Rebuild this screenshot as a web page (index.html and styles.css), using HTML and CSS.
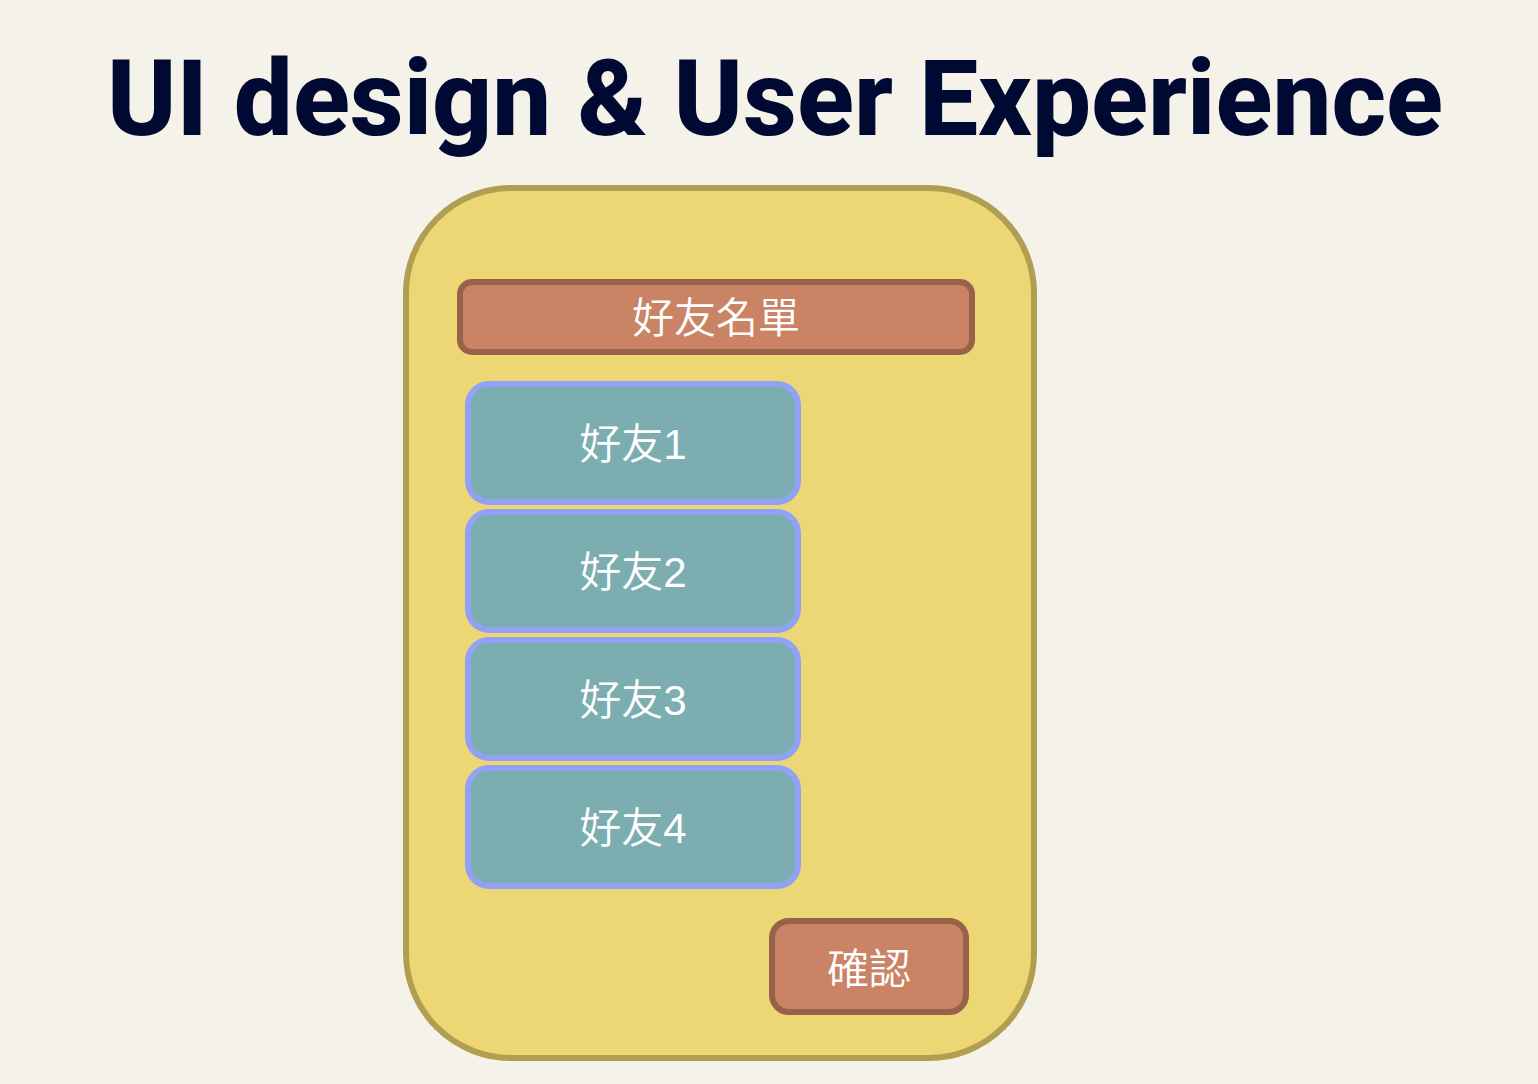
FILE: index.html
```html
<!DOCTYPE html>
<html lang="zh-Hant">
<head>
<meta charset="utf-8">
<meta name="viewport" content="width=device-width, initial-scale=1">
<title>UI design &amp; User Experience</title>
<link rel="stylesheet" href="styles.css">
</head>
<body>
<h1 class="title">UI design &amp; User Experience</h1>
<main class="stage">
  <section class="phone">
    <h2 class="heading">好友名單</h2>
    <div class="friends">
      <button class="friend" type="button">好友1</button>
      <button class="friend" type="button">好友2</button>
      <button class="friend" type="button">好友3</button>
      <button class="friend" type="button">好友4</button>
    </div>
    <button class="confirm" type="button">確認</button>
  </section>
</main>
</body>
</html>
```
FILE: styles.css
```css
* {
  box-sizing: border-box;
}

body {
  margin: 0;
  padding: 40px 24px 23px;
  background: #f5f2ea;
  color: #fff;
  font-family: "Liberation Sans", "Noto Sans CJK TC", sans-serif;
}

.title {
  margin: 0;
  padding-left: 12px;
  color: #000931;
  font-family: Roboto, "Liberation Sans", sans-serif;
  font-size: 105px;
  font-weight: 800;
  line-height: 120px;
  text-align: center;
  white-space: nowrap;
}

.stage {
  display: flex;
  justify-content: center;
  padding: 25px 98px 0 0;
}

.phone {
  display: flex;
  flex-direction: column;
  width: 100%;
  max-width: 634px;
  padding: 88px 56px 40px 48px;
  border: 6px solid #b09f51;
  border-radius: 108px;
  background: #edd674;
}

.heading,
.friend,
.confirm {
  margin: 0;
  color: #fff;
  font-family: inherit;
  font-size: 42px;
  font-weight: 350;
  text-align: center;
}

.heading {
  padding-top: 4px;
  border: 6px solid #97614a;
  border-radius: 15px;
  background: #ca8465;
  line-height: 60px;
}

.friends {
  display: flex;
  flex-direction: column;
  gap: 4px;
  margin: 26px 0 0 8px;
}

.friend {
  width: 336px;
  max-width: 100%;
  height: 124px;
  padding: 0 0 6px;
  border: 6px solid #91a1f5;
  border-radius: 24px;
  background: #7cadb0;
}

.confirm {
  align-self: flex-end;
  width: 200px;
  height: 97px;
  margin: 29px 6px 0 0;
  padding: 0 0 2px;
  border: 6px solid #97614a;
  border-radius: 20px;
  background: #ca8465;
}
```
